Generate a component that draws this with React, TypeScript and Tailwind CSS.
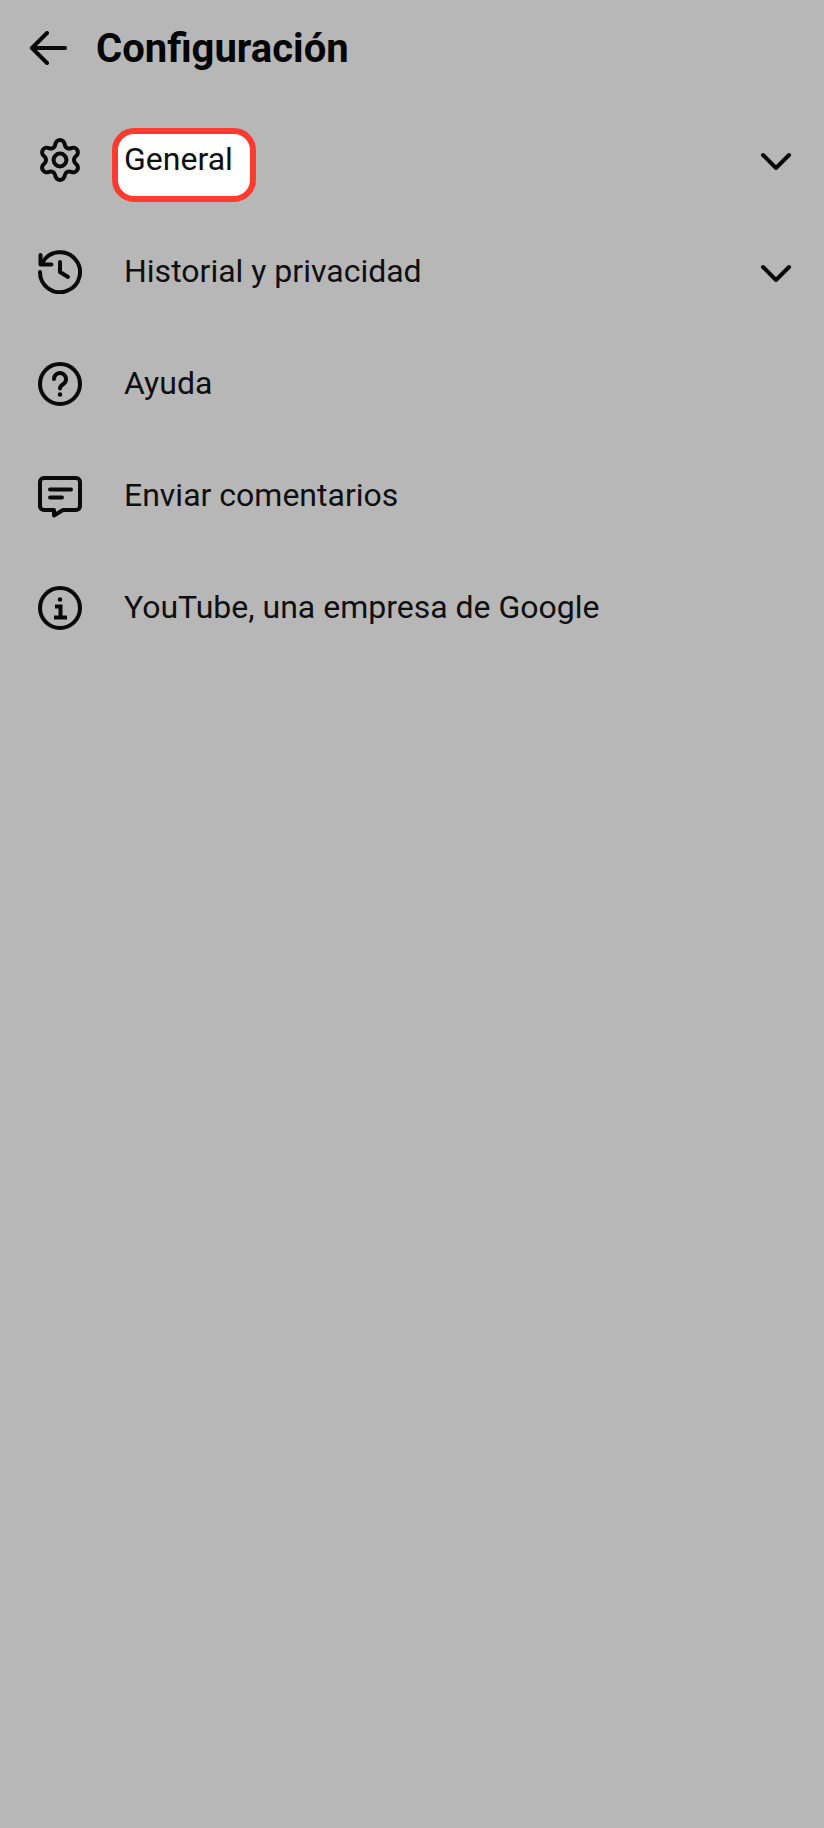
import type { ReactNode } from 'react';

const iconStroke = {
  fill: 'none',
  stroke: 'currentColor',
  strokeWidth: 4,
  strokeLinecap: 'round' as const,
  strokeLinejoin: 'round' as const,
};

function Icon({ children }: { children: ReactNode }) {
  return (
    <svg viewBox="0 0 44 44" className="h-11 w-11 shrink-0 text-[#0a0a0a]" {...iconStroke}>
      {children}
    </svg>
  );
}

function BackArrow() {
  return (
    <svg viewBox="0 0 38 34" className="h-[34px] w-[38px] shrink-0 text-[#0a0a0a]" {...iconStroke}>
      <path d="M36 17H3" />
      <path d="M18 2 3 17l15 15" />
    </svg>
  );
}

function GearIcon() {
  return (
    <Icon>
      <g transform="translate(22 22) scale(2) translate(-12 -12)" strokeWidth="2">
        <path d="M9.671 4.136a2.34 2.34 0 0 1 4.659 0 2.34 2.34 0 0 0 3.319 1.915 2.34 2.34 0 0 1 2.33 4.033 2.34 2.34 0 0 0 0 3.831 2.34 2.34 0 0 1-2.33 4.033 2.34 2.34 0 0 0-3.319 1.915 2.34 2.34 0 0 1-4.659 0 2.34 2.34 0 0 0-3.32-1.915 2.34 2.34 0 0 1-2.33-4.033 2.34 2.34 0 0 0 0-3.831A2.34 2.34 0 0 1 6.35 6.051a2.34 2.34 0 0 0 3.319-1.915" />
        <circle cx="12" cy="12" r="3.200" />
      </g>
    </Icon>
  );
}

function HistoryIcon() {
  return (
    <Icon>
      <path d="M4.500 12.500A20 20 0 1 1 2 22" />
      <path d="M2.500 5v9.500h11" />
      <path d="M22 12v10l8 5" />
    </Icon>
  );
}

function HelpIcon() {
  return (
    <Icon>
      <circle cx="22" cy="22" r="20" />
      <path d="M16 17a6 6 0 1 1 9.500 4.900c-2 1.400-3.500 2.400-3.500 4.600" />
      <circle cx="22" cy="32.500" r="1.500" fill="currentColor" strokeWidth="1.500" />
    </Icon>
  );
}

function FeedbackIcon() {
  return (
    <Icon>
      <path d="M6 4h32a4 4 0 0 1 4 4v24a4 4 0 0 1-4 4H25l-9 5.500V36H6a4 4 0 0 1-4-4V8a4 4 0 0 1 4-4z" />
      <path d="M12 15.500h21" />
      <path d="M12 23.500h12" />
    </Icon>
  );
}

function InfoIcon() {
  return (
    <Icon>
      <circle cx="22" cy="22" r="20" />
      <circle cx="22" cy="13.500" r="1.500" fill="currentColor" strokeWidth="1.500" />
      <path d="M17 20.500h5.500v11" strokeLinecap="butt" strokeLinejoin="miter" />
      <path d="M16 31.500h13" strokeLinecap="butt" />
    </Icon>
  );
}

function Chevron() {
  return (
    <svg viewBox="0 0 32 19" className="relative top-px h-[19px] w-8 shrink-0 text-[#0a0a0a]" {...iconStroke}>
      <path d="M3 3l13 13L29 3" />
    </svg>
  );
}

const rows = [
  { label: 'Historial y privacidad', icon: <HistoryIcon />, expandable: true },
  { label: 'Ayuda', icon: <HelpIcon />, expandable: false },
  { label: 'Enviar comentarios', icon: <FeedbackIcon />, expandable: false },
  { label: 'YouTube, una empresa de Google', icon: <InfoIcon />, expandable: false },
];

export default function App() {
  return (
    <div className="flex h-[1828px] w-full flex-col bg-[#b7b7b7] font-['Roboto',sans-serif] text-[#0f0f0f]">
      {/* Header */}
      <div className="flex h-24 items-center pl-[29px]">
        <BackArrow />
        <h1 className="relative top-px ml-[29px] text-[40px] font-bold leading-none text-[#050505]">Configuración</h1>
      </div>

      {/* Settings list */}
      <div className="mt-2 flex flex-col">
        <div className="flex h-28 items-center pl-[38px] pr-[32px]">
          <GearIcon />
          <div className="relative ml-[43px] flex-1">
            <div className="absolute -top-3 -left-[13px] h-[74px] w-[144px] rounded-[22px] border-[6px] border-[#ff3b30] bg-white" />
            <span className="relative -top-px -left-px block text-[32px] leading-10">General</span>
          </div>
          <Chevron />
        </div>
        {rows.map((row) => (
          <div key={row.label} className="flex h-28 items-center pl-[38px] pr-[32px]">
            {row.icon}
            <span className="relative -top-px ml-[42px] flex-1 text-[32px] leading-10">{row.label}</span>
            {row.expandable && <Chevron />}
          </div>
        ))}
      </div>
    </div>
  );
}
